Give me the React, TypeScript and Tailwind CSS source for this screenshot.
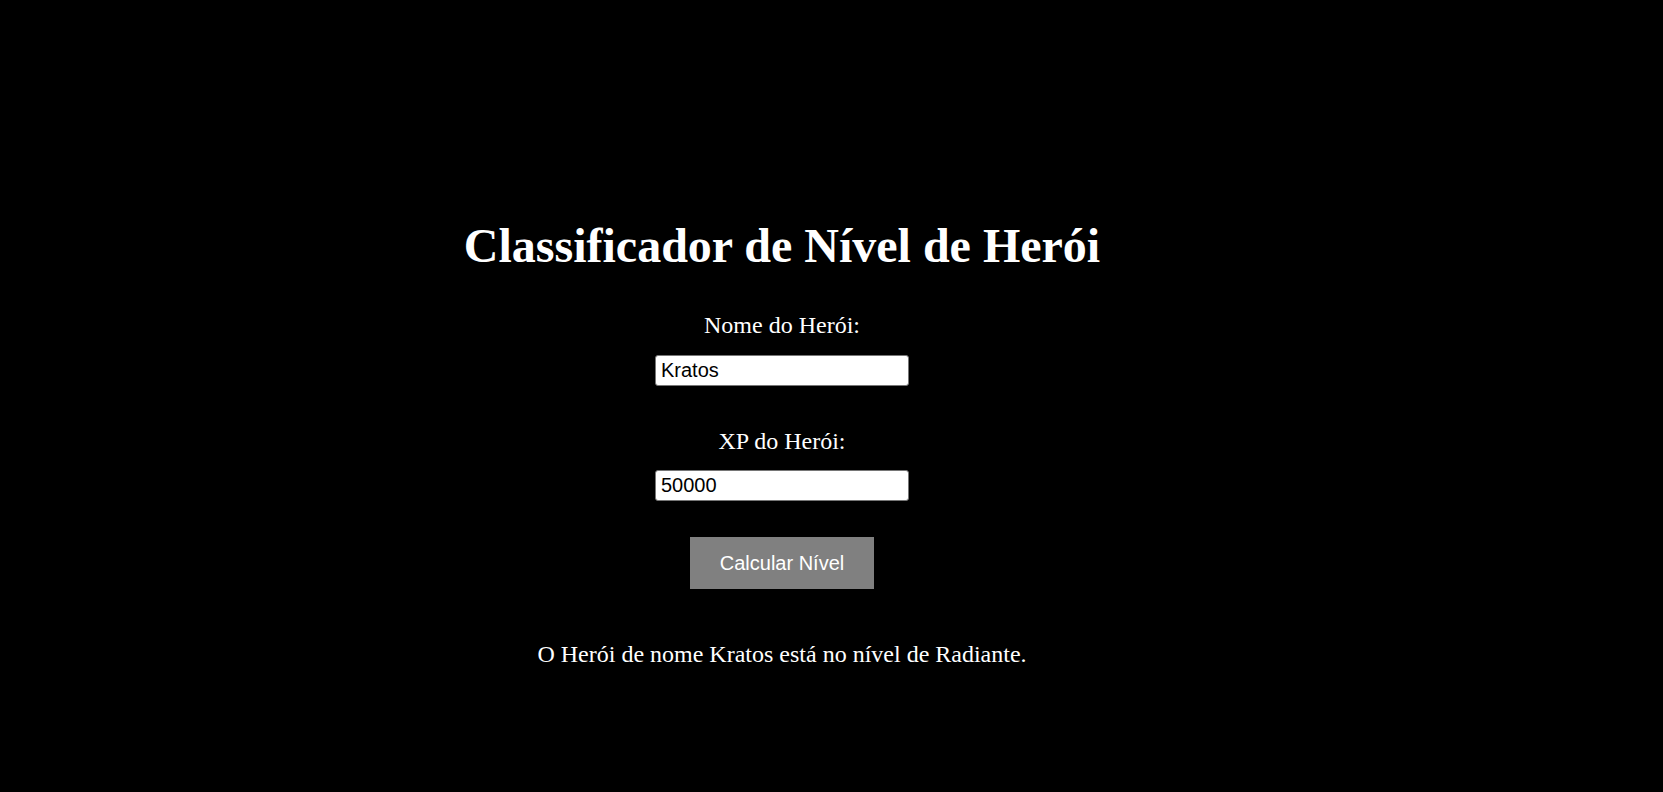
import React, { useState } from "react";

// Hero level classifier: name + XP in, level text out
function levelFor(xp: number): string {
  if (xp < 1000) return "Ferro";
  if (xp <= 2000) return "Bronze";
  if (xp <= 5000) return "Prata";
  if (xp <= 7000) return "Ouro";
  if (xp <= 8000) return "Platina";
  if (xp <= 9000) return "Ascendente";
  if (xp <= 10000) return "Imortal";
  return "Radiante";
}

export default function App() {
  const [name, setName] = useState("Kratos");
  const [xp, setXp] = useState("50000");
  const [result, setResult] = useState("O Herói de nome Kratos está no nível de Radiante.");

  const calc = () => {
    const level = levelFor(Number(xp) || 0);
    setResult(`O Herói de nome ${name} está no nível de ${level}.`);
  };

  return (
    <div className="min-h-screen w-full bg-black text-white font-['Liberation_Serif','Times_New_Roman',serif]">
      <div className="flex flex-col items-center pt-[218px] pr-[99px]">
        <h1 className="text-[48px] leading-[55px] font-bold">Classificador de Nível de Herói</h1>

        <label htmlFor="nome" className="mt-[38px] text-[24px] leading-[28px]">
          Nome do Herói:
        </label>
        <input
          id="nome"
          type="text"
          value={name}
          onChange={(e) => setName(e.target.value)}
          className="mt-[16px] w-[254px] h-[31px] px-[5px] bg-white text-black border border-[#767676] rounded-[3px] text-[20px] leading-[23px] font-['Liberation_Sans',Arial,sans-serif] outline-none"
        />

        <label htmlFor="xp" className="mt-[41px] text-[24px] leading-[28px]">
          XP do Herói:
        </label>
        <input
          id="xp"
          type="text"
          value={xp}
          onChange={(e) => setXp(e.target.value)}
          className="mt-[15px] w-[254px] h-[31px] px-[5px] bg-white text-black border border-[#767676] rounded-[3px] text-[20px] leading-[23px] font-['Liberation_Sans',Arial,sans-serif] outline-none"
        />

        <button
          onClick={calc}
          className="mt-[36px] w-[184px] h-[52px] flex items-center justify-center bg-[#808080] text-white text-[20px] leading-[23px] font-['Liberation_Sans',Arial,sans-serif]"
        >
          Calcular Nível
        </button>

        <p className="mt-[51px] text-[24px] leading-[28px]">{result}</p>
      </div>
    </div>
  );
}
